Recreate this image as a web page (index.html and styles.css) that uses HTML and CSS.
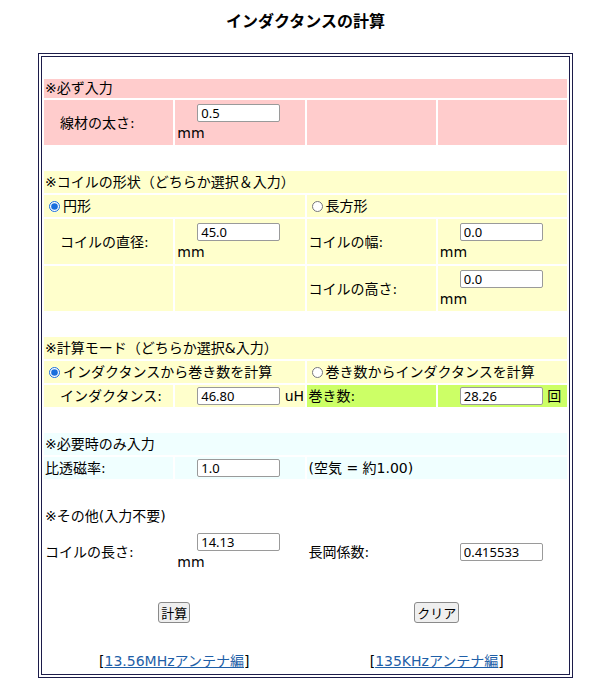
FILE: index.html
```html
<!DOCTYPE html>
<html lang="ja">
<head>
  <meta charset="UTF-8">
  <title>インダクタンスの計算</title>
  <link rel="stylesheet" href="styles.css">
</head>
<body>
  <div class="page">
    <h1 class="title">インダクタンスの計算</h1>

    <form class="calc">
      <table class="calc-table">
        <colgroup><col><col><col><col></colgroup>

        <!-- 必須入力 -->
        <tr class="blank first"><td colspan="4"></td></tr>
        <tr class="pink head"><td colspan="4">※必ず入力</td></tr>
        <tr class="pink">
          <td class="indent">線材の太さ:</td>
          <td class="field"><input class="num" type="text" value="0.5"><span class="unit">mm</span></td>
          <td></td>
          <td></td>
        </tr>

        <!-- コイルの形状 -->
        <tr class="blank"><td colspan="4"></td></tr>
        <tr class="yellow"><td colspan="4">※コイルの形状（どちらか選択＆入力）</td></tr>
        <tr class="yellow">
          <td colspan="2"><label><input type="radio" name="shape" checked>円形</label></td>
          <td colspan="2"><label><input type="radio" name="shape">長方形</label></td>
        </tr>
        <tr class="yellow">
          <td class="indent">コイルの直径:</td>
          <td class="field"><input class="num" type="text" value="45.0"><span class="unit">mm</span></td>
          <td class="plain">コイルの幅:</td>
          <td class="field"><input class="num" type="text" value="0.0"><span class="unit">mm</span></td>
        </tr>
        <tr class="yellow">
          <td></td>
          <td></td>
          <td class="plain">コイルの高さ:</td>
          <td class="field"><input class="num" type="text" value="0.0"><span class="unit">mm</span></td>
        </tr>

        <!-- 計算モード -->
        <tr class="blank"><td colspan="4"></td></tr>
        <tr class="yellow"><td colspan="4">※計算モード（どちらか選択&amp;入力）</td></tr>
        <tr class="yellow">
          <td colspan="2"><label><input type="radio" name="mode" checked>インダクタンスから巻き数を計算</label></td>
          <td colspan="2"><label><input type="radio" name="mode">巻き数からインダクタンスを計算</label></td>
        </tr>
        <tr>
          <td class="yellow-cell indent">インダクタンス:</td>
          <td class="yellow-cell inline"><input class="num" type="text" value="46.80"> uH</td>
          <td class="green-cell plain">巻き数:</td>
          <td class="green-cell inline"><input class="num" type="text" value="28.26"> 回</td>
        </tr>

        <!-- 必要時のみ -->
        <tr class="blank"><td colspan="4"></td></tr>
        <tr class="blue"><td colspan="4">※必要時のみ入力</td></tr>
        <tr class="blue">
          <td>比透磁率:</td>
          <td class="inline"><input class="num" type="text" value="1.0"></td>
          <td colspan="2" class="plain">(空気 = 約1.00)</td>
        </tr>

        <!-- その他 -->
        <tr class="blank"><td colspan="4"></td></tr>
        <tr><td colspan="4">※その他(入力不要)</td></tr>
        <tr>
          <td>コイルの長さ:</td>
          <td class="field"><input class="num" type="text" value="14.13"><span class="unit">mm</span></td>
          <td class="plain">長岡係数:</td>
          <td class="inline"><input class="num" type="text" value="0.415533"></td>
        </tr>

        <!-- ボタン -->
        <tr class="blank"><td colspan="4"></td></tr>
        <tr class="center">
          <td colspan="2"><button type="button" class="btn">計算</button></td>
          <td colspan="2"><button type="reset" class="btn">クリア</button></td>
        </tr>
        <tr class="blank"><td colspan="4"></td></tr>
        <tr class="center">
          <td colspan="2">[<a href="#">13.56MHzアンテナ編</a>]</td>
          <td colspan="2">[<a href="#">135KHzアンテナ編</a>]</td>
        </tr>
      </table>
    </form>
  </div>
</body>
</html>
```

FILE: styles.css
```css
body {
  margin: 8px;
  font-family: "DejaVu Sans", "Noto Sans CJK JP", sans-serif;
  font-size: 14px;
  color: #000;
  background: #fff;
}

.page {
  padding-left: 11px;
}

.title {
  margin: 0 0 22px;
  padding-top: 1px;
  font-family: "Noto Sans CJK JP", sans-serif;
  font-size: 16px;
  line-height: 22px;
  font-weight: bold;
  text-align: center;
}

/* table */
.calc-table {
  width: 535px;
  margin: 0 auto;
  border: 4px double #1c1c4a;
  border-spacing: 2px;
  table-layout: fixed;
}

.calc-table td {
  height: 20px;
  padding: 1px;
  line-height: 20px;
  vertical-align: middle;
  white-space: nowrap;
}

.blank.first td {
  height: 16px;
}

.head td {
  height: 17px;
  line-height: 17px;
}

.pink td { background: #ffcccc; }
.yellow td, .yellow-cell { background: #ffffcc; }
.green-cell { background: #ccff66; }
.blue td { background: #f0ffff; }

.indent {
  padding-left: 16px !important;
}

.plain {
  padding-left: 2px !important;
}

.center td {
  text-align: center;
}

/* inputs */
.num {
  box-sizing: border-box;
  width: 83px;
  height: 18px;
  margin: 0;
  padding: 0 3px;
  border: 1px solid #9a9a9a;
  border-radius: 2px;
  font-family: "Noto Sans", sans-serif;
  font-size: 13px;
  line-height: 16px;
  color: #000;
  background: #fff;
}

.field .num {
  display: block;
  margin: 3px 0 0 21px;
}

.field .unit {
  display: block;
  line-height: 22px;
  padding-left: 1px;
}

.calc-table .inline {
  line-height: 16px;
}

.inline .num {
  margin-left: 21px;
  vertical-align: baseline;
}

input[type="radio"] {
  width: 11px;
  height: 11px;
  margin: 0 3px 0 4px;
  vertical-align: -1px;
  accent-color: #1a6fdc;
}

/* buttons & links */
.btn {
  font-family: "Noto Sans CJK JP", sans-serif;
  font-size: 13px;
  line-height: 17px;
  padding: 1px 2px;
  border: 1px solid #8a8a8a;
  border-radius: 3px;
  background: #efefef;
  color: #000;
  vertical-align: middle;
}

a {
  color: #1f5fa8;
  text-decoration: underline;
}
```
